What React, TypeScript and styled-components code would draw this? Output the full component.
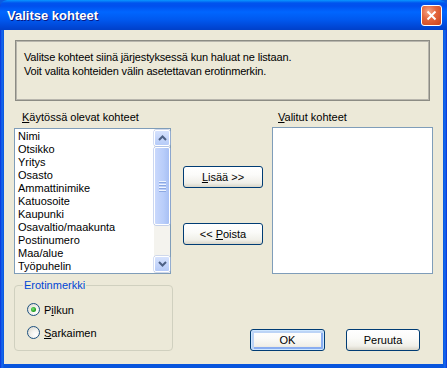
import { ReactNode } from "react";
import styled, { createGlobalStyle } from "styled-components";

const GlobalStyle = createGlobalStyle`
  html, body {
    margin: 0;
    padding: 0;
    background: #0a5ae0;
  }
  body {
    font-family: "Liberation Sans", Arial, sans-serif;
    font-size: 11px;
    color: #000;
  }
`;

const availableItems = [
  "Nimi",
  "Otsikko",
  "Yritys",
  "Osasto",
  "Ammattinimike",
  "Katuosoite",
  "Kaupunki",
  "Osavaltio/maakunta",
  "Postinumero",
  "Maa/alue",
  "Työpuhelin",
];

const Window = styled.div`
  width: 447px;
  height: 368px;
  display: flex;
  flex-direction: column;
  background: linear-gradient(to right, #0831d9 0, #166aee 2px, #0855dd 4px, #0855dd 443px, #166aee 445px, #0831d9 447px);
  border-radius: 7px 7px 0 0;
  overflow: hidden;
  box-sizing: border-box;
`;

const TitleBar = styled.div`
  height: 30px;
  flex: none;
  display: flex;
  align-items: center;
  justify-content: space-between;
  padding: 0 5px 0 7px;
  background: linear-gradient(
    to bottom,
    #0997ff 0,
    #0053ee 3px,
    #0050ee 6px,
    #0066ff 12px,
    #0058ee 20px,
    #0046d5 27px,
    #0040c8 30px
  );
  border-radius: 7px 7px 0 0;
`;

const Title = styled.span`
  color: #fff;
  font-family: "Liberation Sans", Arial, sans-serif;
  font-weight: bold;
  font-size: 13px;
  text-shadow: 1px 1px 0 #0a1883;
`;

const CloseButton = styled.div`
  width: 21px;
  height: 21px;
  box-sizing: border-box;
  border: 1px solid #fff;
  border-radius: 3px;
  background: radial-gradient(circle at 35% 30%, #f5a68a 0, #e5683f 40%, #c8401a 100%);
  display: flex;
  align-items: center;
  justify-content: center;
`;

const Body = styled.div`
  flex: 1;
  margin: 0 4px 4px 4px;
  background: #ece9d8;
  padding: 10px 13px 13px 10px;
  display: flex;
  flex-direction: column;
`;

const InfoBox = styled.div`
  height: 61px;
  margin-left: 1px;
  box-sizing: border-box;
  border: 1px solid #8c8c84;
  box-shadow: inset 0 0 0 1px #b8b6ad;
  padding: 9px 8px;
  line-height: 14px;
  letter-spacing: -0.15px;
`;

const Columns = styled.div`
  display: grid;
  grid-template-columns: 157px 80px 158px;
  column-gap: 12px;
  margin-top: 10px;
  & > :last-child {
    margin-left: -3px;
  }
`;

const Column = styled.div`
  display: flex;
  flex-direction: column;
`;

const Label = styled.div<{ $indent: number }>`
  height: 13px;
  line-height: 13px;
  padding-left: ${({ $indent }) => $indent}px;
  margin-bottom: 4px;
`;

const ListBox = styled.div<{ $offset?: number; $height?: number }>`
  height: ${({ $height }) => $height ?? 146}px;
  margin-top: ${({ $offset }) => $offset ?? 0}px;
  box-sizing: border-box;
  border: 1px solid #7f9db9;
  background: #fff;
  display: flex;
`;

const ListItems = styled.div`
  flex: 1;
  padding: 1px 0 0 3px;
  overflow: hidden;
`;

const ListItem = styled.div`
  height: 13px;
  line-height: 13px;
  white-space: nowrap;
`;

const ScrollBar = styled.div`
  width: 16px;
  display: flex;
  flex-direction: column;
  background: #f4f3ee;
  padding: 1px 0;
`;

const ScrollButton = styled.div`
  height: 16px;
  flex: none;
  box-sizing: border-box;
  border: 1px solid #fff;
  border-radius: 2px;
  background: linear-gradient(to bottom, #d6e2fd, #b6cbf8);
  box-shadow: 0 0 0 0.5px #a9bde8;
  display: flex;
  align-items: center;
  justify-content: center;
`;

const Thumb = styled.div`
  height: 78px;
  margin-top: 1px;
  box-sizing: border-box;
  border: 1px solid #fff;
  border-radius: 2px;
  background: linear-gradient(to right, #c9d8fc, #b8cdfa 60%, #a8c0f4);
  box-shadow: 0 0 0 0.5px #98afe4;
  display: flex;
  flex-direction: column;
  align-items: center;
  justify-content: center;
  gap: 1px;
`;

const Grip = styled.div`
  width: 7px;
  height: 1px;
  background: #eef4fe;
  border-bottom: 1px solid #8ca8e2;
`;

const Track = styled.div`
  flex: 1;
`;

const Middle = styled.div`
  display: flex;
  flex-direction: column;
  padding-top: 55px;
  gap: 35px;
`;

const Button = styled.div<{ $width: number; $default?: boolean }>`
  width: ${({ $width }) => $width}px;
  height: 22px;
  box-sizing: border-box;
  border: 1px solid #003c74;
  border-radius: 3px;
  background: linear-gradient(to bottom, #ffffff 0, #fbfbf9 40%, #f0efe8 80%, #d8d5c8 100%);
  box-shadow: ${({ $default }) =>
    $default
      ? "inset 0 0 0 1px #cee7ff, inset 1px 1px 0 2px #bcd4f6, inset -1px -1px 0 2px #89adf0"
      : "none"};
  display: flex;
  align-items: center;
  justify-content: center;
  line-height: 13px;
`;

const BottomRow = styled.div`
  margin-top: 11px;
  display: flex;
  align-items: flex-end;
`;

const GroupBox = styled.fieldset`
  margin: 0;
  width: 159px;
  height: 66px;
  box-sizing: border-box;
  border: 1px solid #d0d0bf;
  border-radius: 4px;
  padding: 17px 0 0 12px;
  display: flex;
  flex-direction: column;
  gap: 10px;
  position: relative;
`;

const Legend = styled.span`
  position: absolute;
  top: -7px;
  left: 8px;
  padding: 0 1px;
  background: #ece9d8;
  color: #0046d5;
  line-height: 13px;
`;

const RadioRow = styled.div`
  display: flex;
  align-items: center;
  gap: 4px;
  height: 13px;
`;

const RadioCircle = styled.div<{ $checked?: boolean }>`
  width: 13px;
  height: 13px;
  box-sizing: border-box;
  border-radius: 50%;
  border: 1px solid #1c5180;
  background: radial-gradient(circle at 70% 70%, #ffffff 0, #f3f3ef 40%, #d6d3c8 100%);
  display: flex;
  align-items: center;
  justify-content: center;
  &::after {
    content: "";
    display: ${({ $checked }) => ($checked ? "block" : "none")};
    width: 5px;
    height: 5px;
    border-radius: 50%;
    background: radial-gradient(circle at 40% 40%, #7be27b 0, #21a121 60%, #1a8a1a 100%);
  }
`;

const Actions = styled.div`
  margin-left: auto;
  display: flex;
  gap: 21px;
  padding-right: 10px;
`;

const U = styled.span`
  text-decoration: underline;
  text-underline-offset: 1px;
`;

function Chevron({ up }: { up?: boolean }) {
  return (
    <svg width="9" height="6" viewBox="0 0 9 6">
      <path
        d={up ? "M1 5 L4.5 1.5 L8 5" : "M1 1 L4.5 4.5 L8 1"}
        fill="none"
        stroke="#4d6185"
        strokeWidth="2"
      />
    </svg>
  );
}

function Radio({ checked, children }: { checked?: boolean; children: ReactNode }) {
  return (
    <RadioRow>
      <RadioCircle $checked={checked} />
      <span>{children}</span>
    </RadioRow>
  );
}

export default function App() {
  return (
    <>
      <GlobalStyle />
      <Window>
        <TitleBar>
          <Title>Valitse kohteet</Title>
          <CloseButton>
            <svg width="11" height="11" viewBox="0 0 11 11">
              <path d="M1.5 1.5 L9.5 9.5 M9.5 1.5 L1.5 9.5" stroke="#fff" strokeWidth="2" />
            </svg>
          </CloseButton>
        </TitleBar>
        <Body>
          <InfoBox>
            Valitse kohteet siinä järjestyksessä kun haluat ne listaan.
            <br />
            Voit valita kohteiden välin asetettavan erotinmerkin.
          </InfoBox>
          <Columns>
            <Column>
              <Label $indent={8}>
                <U>K</U>äytössä olevat kohteet
              </Label>
              <ListBox>
                <ListItems>
                  {availableItems.map((item) => (
                    <ListItem key={item}>{item}</ListItem>
                  ))}
                </ListItems>
                <ScrollBar>
                  <ScrollButton>
                    <Chevron up />
                  </ScrollButton>
                  <Thumb>
                    <Grip />
                    <Grip />
                    <Grip />
                    <Grip />
                  </Thumb>
                  <Track />
                  <ScrollButton>
                    <Chevron />
                  </ScrollButton>
                </ScrollBar>
              </ListBox>
            </Column>
            <Middle>
              <Button $width={80}>
                <span>
                  <U>L</U>isää &gt;&gt;
                </span>
              </Button>
              <Button $width={80}>
                <span>
                  &lt;&lt; <U>P</U>oista
                </span>
              </Button>
            </Middle>
            <Column>
              <Label $indent={6}>
                <U>V</U>alitut kohteet
              </Label>
              <ListBox $offset={-1} $height={147} />
            </Column>
          </Columns>
          <BottomRow>
            <GroupBox>
              <Legend>Erotinmerkki</Legend>
              <Radio checked>
                P<U>i</U>lkun
              </Radio>
              <Radio>
                <U>S</U>arkaimen
              </Radio>
            </GroupBox>
            <Actions>
              <Button $width={75} $default>
                OK
              </Button>
              <Button $width={74}>Peruuta</Button>
            </Actions>
          </BottomRow>
        </Body>
      </Window>
    </>
  );
}
